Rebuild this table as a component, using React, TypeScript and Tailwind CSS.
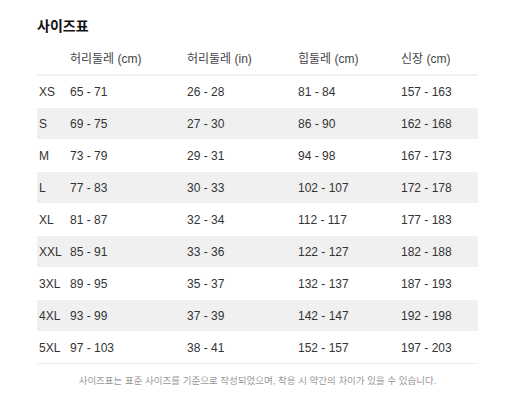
import React from "react";

const rows = [
  ["XS", "65 - 71", "26 - 28", "81 - 84", "157 - 163"],
  ["S", "69 - 75", "27 - 30", "86 - 90", "162 - 168"],
  ["M", "73 - 79", "29 - 31", "94 - 98", "167 - 173"],
  ["L", "77 - 83", "30 - 33", "102 - 107", "172 - 178"],
  ["XL", "81 - 87", "32 - 34", "112 - 117", "177 - 183"],
  ["XXL", "85 - 91", "33 - 36", "122 - 127", "182 - 188"],
  ["3XL", "89 - 95", "35 - 37", "132 - 137", "187 - 193"],
  ["4XL", "93 - 99", "37 - 39", "142 - 147", "192 - 198"],
  ["5XL", "97 - 103", "38 - 41", "152 - 157", "197 - 203"],
];

const headers = ["", "허리둘레 (cm)", "허리둘레 (in)", "힙둘레 (cm)", "신장 (cm)"];

const cols = "grid grid-cols-[31px_117px_111px_103px_79px]";

const App: React.FC = () => {
  return (
    <div
      className="w-[510px] h-[413px] bg-white pl-[37px] pt-[16px] text-[#333]"
      style={{ fontFamily: '"Liberation Sans", "Noto Sans CJK KR", sans-serif' }}
    >
      {/* Title */}
      <h2 className="text-[14px] leading-[20px] font-bold text-[#111]">사이즈표</h2>

      {/* Table */}
      <div className="w-[441px] mt-[8px] text-[12px]">
        <div className={`${cols} h-[32px] items-center border-b-2 border-[#f1f1f1] text-[#444]`}>
          {headers.map((h, i) => (
            <div key={i} className="pl-[2px] whitespace-nowrap">
              {h}
            </div>
          ))}
        </div>

        {rows.map((r, i) => (
          <div
            key={r[0]}
            className={`${cols} h-[32px] items-center border-b ${
              i % 2 === 1 ? "bg-[#f0f0f0]" : "bg-white"
            } ${i === rows.length - 1 ? "border-[#eeeeee]" : "border-white"}`}
          >
            {r.map((c, j) => (
              <div key={j} className="pl-[2px] whitespace-nowrap">
                {c}
              </div>
            ))}
          </div>
        ))}
      </div>

      {/* Note */}
      <p className="w-[441px] mt-[12px] text-center text-[9.5px] leading-[10px] text-[#999]">
        사이즈표는 표준 사이즈를 기준으로 작성되었으며, 착용 시 약간의 차이가 있을 수 있습니다.
      </p>
    </div>
  );
};

export default App;
